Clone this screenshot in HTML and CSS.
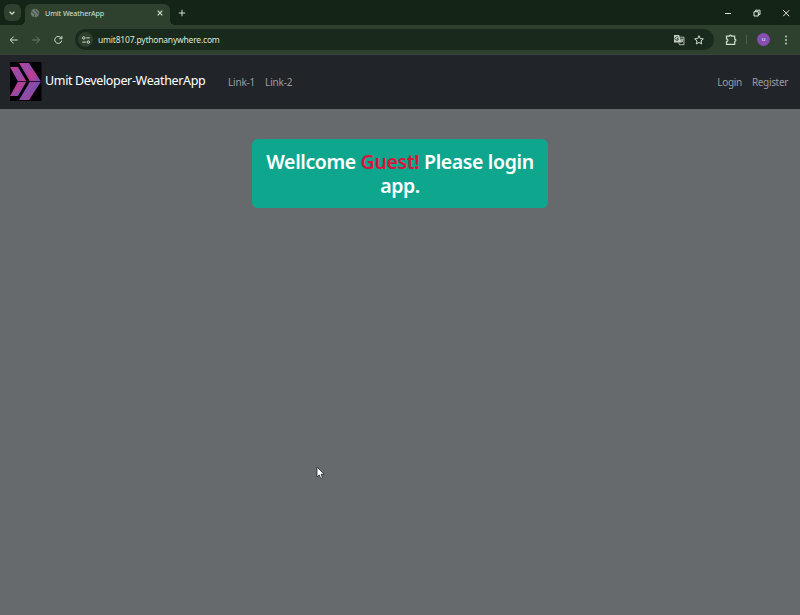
FILE: index.html
```html
<!DOCTYPE html>
<html lang="en">
<head>
<meta charset="utf-8">
<title>Umit WeatherApp</title>
<link rel="stylesheet" href="styles.css">
</head>
<body>
<header class="browser">
  <div class="tabstrip">
    <button class="tab-search" aria-label="Search tabs"><svg width="18" height="18" viewBox="0 0 18 18"><path d="M6.6 7.800l2.400 2.400L11.400 7.800"/></svg></button>
    <div class="tab">
      <svg class="globe" width="10" height="10" viewBox="0 0 10 10"><circle cx="5" cy="5" r="4.6"/><path d="M1.2 3.8Q3 4 4 5.2Q5.3 6.2 4.4 8.8M5.2.8Q4.4 2.3 6 3Q7.5 3.2 7 5L9 6"/></svg>
      <span class="tab-title">Umit WeatherApp</span>
      <svg class="tab-close" width="8" height="8" viewBox="0 0 8 8"><path d="M1.7 1.7l4.6 4.6M6.3 1.7L1.7 6.3"/></svg>
    </div>
    <svg class="new-tab" width="8" height="8" viewBox="0 0 8 8"><path d="M4 .8v6.4M.8 4h6.4"/></svg>
    <div class="window-controls">
      <svg width="10" height="10" viewBox="0 0 10 10"><path d="M2 5.5h6"/></svg>
      <svg width="10" height="10" viewBox="0 0 10 10"><path d="M2 3.7h4.3V8H2zM3.6 3.5V2.2H8v4.3H6.5"/></svg>
      <svg width="10" height="10" viewBox="0 0 10 10"><path d="M2.2 2.2l6 6M8.2 2.2l-6 6"/></svg>
    </div>
  </div>
  <div class="toolbar">
    <div class="history">
      <svg width="10" height="10" viewBox="0 0 10 10"><path d="M8.6 5H1.200M4.600 1.6L1.200 5l3.4 3.4"/></svg>
      <svg class="off" width="10" height="10" viewBox="0 0 10 10"><path d="M1.2 5h7.400M5.200 1.6L8.600 5 5.2 8.400"/></svg>
      <svg width="10" height="10" viewBox="0 0 10 10"><path d="M8.700 5.600A3.500 3.500 0 1 1 7.900 2.600L8.700 3.400M8.900 1.100v2.600H6.300"/></svg>
    </div>
    <div class="address">
      <span class="site-info"><svg width="10" height="10" viewBox="0 0 10 10"><path d="M5.200 2.900H8.700M1.300 7.100H4.800"/><circle cx="2.700" cy="2.900" r="1.200"/><circle cx="7.300" cy="7.100" r="1.200"/></svg></span>
      <span class="url">umit8107.pythonanywhere.com</span>
      <svg class="translate" width="12" height="12" viewBox="0 0 12 12"><path class="fill" d="M1 1h5.200l2.300 7.500H1z"/><path class="cut" d="M5.600 4.700H4v.9h.7M5.300 3.300A1.900 1.900 0 1 0 5.600 5.300"/><path d="M7 3.200h4v7.500H6.500L5.800 8.700M7.700 5.300h2.800M9 4.500v.8M10 5.500Q9.500 7.200 8 8.200M8.300 6.200l1.800 2"/></svg>
      <svg class="star" width="10" height="10" viewBox="0 0 10 10"><path d="M5 .7l1.250 2.900 3.100.28-2.350 2.050.7 3.050L5 7.400 2.300 8.980l.7-3.050L.65 3.880l3.100-.28z"/></svg>
    </div>
    <svg class="puzzle" width="12" height="12" viewBox="0 0 12 12"><path d="M1.500 2.200h2.900a1.100 1.100 0 0 1 2.200 0h3.100v2.900a1.150 1.150 0 0 1 0 2.300v3H1.500V7.700a1.400 1.400 0 0 0 0-2.800z"/></svg>
    <span class="divider"></span>
    <span class="avatar">u</span>
    <svg class="menu" width="4" height="10" viewBox="0 0 4 10"><circle cx="2" cy="1.500" r=".9"/><circle cx="2" cy="5" r=".9"/><circle cx="2" cy="8.500" r=".9"/></svg>
  </div>
</header>
<nav class="navbar">
  <svg class="logo" width="32" height="39" viewBox="0 0 32 39">
    <defs><linearGradient id="g" gradientUnits="userSpaceOnUse" x1="0" y1="2" x2="26" y2="38"><stop offset="0" stop-color="#d13c92"/><stop offset=".3" stop-color="#8b4eaa"/><stop offset=".5" stop-color="#b83d94"/><stop offset=".72" stop-color="#7650ae"/><stop offset="1" stop-color="#c23d92"/></linearGradient></defs>
    <rect width="31.500" height="39" fill="#050207"/>
    <path fill="url(#g)" d="M0 5h8l8.500 14.500L8 34H0l8-14.500zM9 1h10l12 18.500L19 38H9l11-18.500z"/>
    <path d="M8 19.500h24" stroke="#1b0b24" stroke-width=".9"/>
    <path d="M4 7l9 12M12 2l12 16M14 34l11-13M4 32l8-11M16 3l3 7 6 5" stroke="#d44299" stroke-width="1" fill="none" opacity=".65"/>
  </svg>
  <a class="brand">Umit Developer-WeatherApp</a>
  <div class="links"><a>Link-1</a><a>Link-2</a></div>
  <div class="account"><a>Login</a><a>Register</a></div>
</nav>
<main>
  <h1 class="welcome">Wellcome <span>Guest!</span> Please login app.</h1>
</main>
<svg class="pointer" width="9" height="14" viewBox="0 0 9 14"><path d="M1 1v10l2.300-2.100 1.500 3.500 1.700-.7L5 8.300h3.100z"/></svg>
</body>
</html>
```
FILE: styles.css
```css
* { box-sizing: border-box; }
body {
  margin: 0;
  height: 615px;
  overflow: hidden;
  background: #666a6d;
  font-family: "Noto Sans", "Open Sans", sans-serif;
}
svg { display: block; flex: none; }
.browser svg { fill: none; stroke: #d0dccf; stroke-width: 1; }
.tabstrip {
  display: flex;
  align-items: center;
  height: 25px;
  padding-left: 4px;
  background: #142517;
}
.tab-search {
  width: 17px;
  height: 17px;
  padding: 0;
  border: 0;
  border-radius: 6px;
  background: #2e412f;
}
.tab-search svg { margin: -1px; }
.browser .tab-search svg { stroke-width: 1.3; }
.tab {
  position: relative;
  display: flex;
  align-items: center;
  width: 145px;
  height: 21px;
  margin: 4px 0 0 4px;
  padding: 0 6px 4px 5px;
  border-radius: 6px 6px 0 0;
  background: #2e412f;
}
.tab::before,
.tab::after {
  content: "";
  position: absolute;
  bottom: 0;
  width: 5px;
  height: 5px;
}
.tab::before { left: -5px; background: radial-gradient(circle at 0 0, transparent 5px, #2e412f 5px); }
.tab::after { right: -5px; background: radial-gradient(circle at 100% 0, transparent 5px, #2e412f 5px); }
.browser .globe { fill: #6d7c72; stroke: #35453a; stroke-width: .8; }
.tab-title {
  margin-left: 5px;
  color: #d7e2d5;
  font: 7.200px/14px "Noto Sans", sans-serif;
  letter-spacing: -.08px;
  white-space: nowrap;
}
.tab-close { margin-left: auto; }
.browser .tab-close { stroke-width: 1.2; }
.new-tab { margin-left: 8px; }
.window-controls { display: flex; gap: 19px; margin-left: auto; padding-right: 9.500px; }
.browser .window-controls svg { stroke: #e2e9e2; }
.toolbar {
  display: flex;
  align-items: center;
  height: 30px;
  padding: 0 12px 0 9px;
  border-bottom: 1px solid #3a423e;
  background: #2e412f;
}
.history { display: flex; gap: 12px; width: 66px; }
.browser .off { stroke: #6e7d6e; }
.address {
  display: flex;
  align-items: center;
  width: 639px;
  height: 21px;
  padding: 0 10px 0 3px;
  border-radius: 11px;
  background: #19291b;
}
.site-info {
  display: grid;
  place-items: center;
  width: 15px;
  height: 15px;
  border-radius: 50%;
  background: #2e412f;
}
.url { margin-left: 5px; color: #dce6da; font: 8.500px/15px "Noto Sans", sans-serif; letter-spacing: -.2px; }
.translate { margin-left: auto; }
.browser .translate .fill { fill: #c5d1c4; stroke: none; }
.browser .translate .cut { stroke: #263a28; stroke-width: .8; }
.browser .translate { stroke-width: .8; }
.star { margin-left: 9px; }
.puzzle { margin-left: 11px; }
.browser .puzzle { stroke-width: 1.2; }
.divider { width: 1px; height: 9px; margin-left: 9px; background: #4a5e4c; }
.avatar {
  width: 13px;
  height: 13px;
  margin-left: 10px;
  border-radius: 50%;
  background: #874db0;
  color: #eee4f5;
  font: 6px/12px "Noto Sans", sans-serif;
  text-align: center;
}
.menu { margin-left: auto; }
.browser .menu { fill: #d0dccf; stroke: none; }
.navbar {
  display: flex;
  align-items: center;
  height: 54px;
  padding: 0 12px 0 10px;
  background: #212529;
}
.logo { margin-top: -1px; }
.brand {
  width: 183px;
  margin: -3px 0 0 3px;
  color: #fff;
  font-size: 12.500px;
  letter-spacing: -.35px;
  white-space: nowrap;
}
.links,
.account { display: flex; gap: 10px; color: #999ca0; font-size: 10px; letter-spacing: -.2px; }
.account { margin-left: auto; letter-spacing: -.33px; }
main { display: flex; justify-content: center; padding-top: 30px; }
.welcome {
  width: 296px;
  height: 69px;
  margin: 0;
  padding: 11px 10px;
  border-radius: 6px;
  background: #0fa68e;
  color: #fff;
  font-size: 19.500px;
  font-weight: 600;
  letter-spacing: -.37px;
  line-height: 24px;
  text-align: center;
}
.welcome span { color: #dc143c; }
.pointer {
  position: absolute;
  left: 316px;
  top: 466px;
  fill: #fff;
  stroke: #24272b;
  stroke-width: .8;
}
```
